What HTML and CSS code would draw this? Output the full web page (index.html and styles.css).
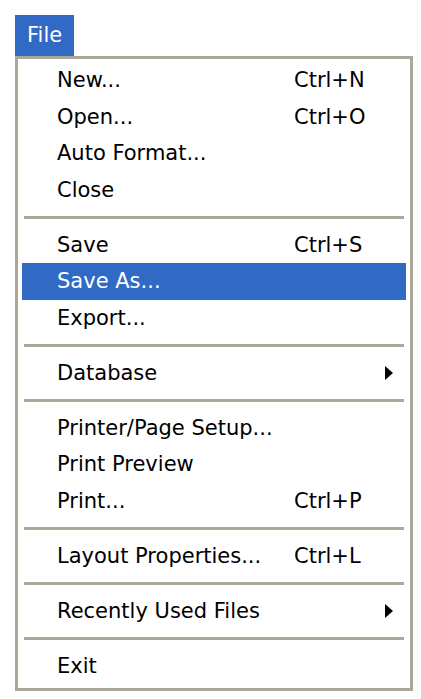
FILE: index.html
```html
<!DOCTYPE html>
<html lang="en">

<head>
	<meta charset="UTF-8">
	<meta name="viewport" content="width=device-width, initial-scale=1.0">
	<title>File menu</title>
	<link rel="stylesheet" href="styles.css">
</head>

<body>
	<div class="menubar">
		<span class="menu-title">File</span>
	</div>
	<ul class="menu">
		<li class="item"><span>New...</span><span class="key">Ctrl+N</span></li>
		<li class="item"><span>Open...</span><span class="key">Ctrl+O</span></li>
		<li class="item"><span>Auto Format...</span></li>
		<li class="item"><span>Close</span></li>
		<li class="sep"></li>
		<li class="item"><span>Save</span><span class="key">Ctrl+S</span></li>
		<li class="item active"><span>Save As...</span></li>
		<li class="item"><span>Export...</span></li>
		<li class="sep"></li>
		<li class="item"><span>Database</span><span class="sub"></span></li>
		<li class="sep"></li>
		<li class="item"><span>Printer/Page Setup...</span></li>
		<li class="item"><span>Print Preview</span></li>
		<li class="item"><span>Print...</span><span class="key">Ctrl+P</span></li>
		<li class="sep"></li>
		<li class="item"><span>Layout Properties...</span><span class="key">Ctrl+L</span></li>
		<li class="sep"></li>
		<li class="item"><span>Recently Used Files</span><span class="sub"></span></li>
		<li class="sep"></li>
		<li class="item"><span>Exit</span></li>
	</ul>
</body>

</html>
```

FILE: styles.css
```css
html,
body {
	margin: 0;
	background: #fff;
}

body {
	padding: 15px 0 0 15px;
	font-family: "DejaVu Sans", "Liberation Sans", sans-serif;
	font-size: 21px;
	color: #000;
}

.menubar {
	display: flex;
}

.menu-title {
	width: 59px;
	height: 41px;
	box-sizing: border-box;
	padding-left: 12px;
	line-height: 40px;
	background: #316ac5;
	color: #fff;
}

.menu {
	list-style: none;
	margin: 0;
	width: 398px;
	box-sizing: border-box;
	padding: 3px 4px 4px;
	border: 3px solid #aca899;
}

.item {
	display: grid;
	grid-template-columns: 237px 1fr;
	align-items: center;
	height: 36.5px;
	padding: 0 13px 0 35px;
	white-space: nowrap;
}

.active {
	background: #316ac5;
	color: #fff;
}

.key {
	justify-self: start;
}

.sub {
	justify-self: end;
	width: 0;
	height: 0;
	border-left: 8px solid #000;
	border-top: 7.5px solid transparent;
	border-bottom: 7.5px solid transparent;
}

.sep {
	height: 18.5px;
	display: flex;
	align-items: center;
	padding: 0 2px;
}

.sep::before {
	content: "";
	flex: 1;
	height: 3px;
	background: #aca899;
}
```
